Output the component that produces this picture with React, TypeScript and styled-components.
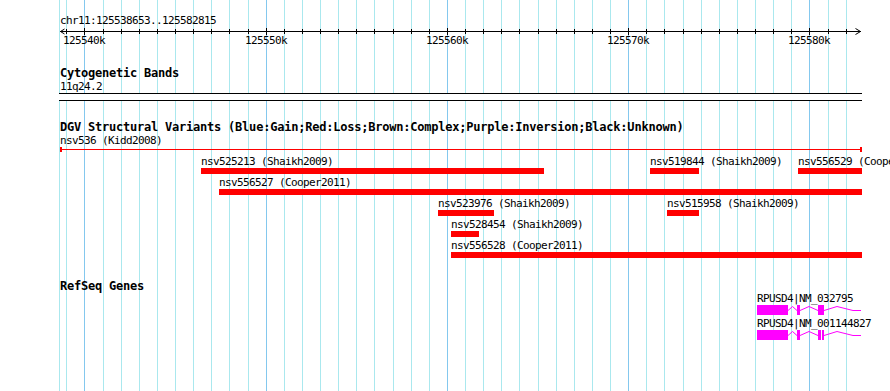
import React from "react";
import styled, { createGlobalStyle } from "styled-components";

const GlobalStyle = createGlobalStyle`
  html, body { margin: 0; padding: 0; background: #ffffff; }
`;

const MINOR = "#aae8ee";
const MAJOR = "#84c8ee";
const RED = "#ff0000";
const MAGENTA = "#ff00ff";
const FONT = `"DejaVu Sans Mono", "Liberation Mono", monospace`;

const gridX = (k: number) => Math.round(84.4 + k * 18.125);
const KS = Array.from({ length: 44 }, (_, i) => i - 1);

const Page = styled.div`
  position: relative;
  width: 890px;
  height: 391px;
  overflow: hidden;
  background: #ffffff;
  font-family: ${FONT};
  color: #000000;
`;

const GridLayer = styled.svg`
  position: absolute;
  top: 0;
  left: 0;
  z-index: 0;
  pointer-events: none;
`;

const Tracks = styled.div`
  position: relative;
  z-index: 1;
  display: flex;
  flex-direction: column;
  padding-top: 14px;
`;

const SmallText = styled.div`
  font-size: 11px;
  letter-spacing: -0.62px;
  line-height: 13px;
  white-space: nowrap;
`;

const LocationText = styled(SmallText)`
  padding-left: 60px;
`;

const AxisSvg = styled.svg`
  display: block;
  overflow: visible;
`;

const Track = styled.section<{ $gap: number }>`
  display: flex;
  flex-direction: column;
  margin-top: ${(p) => p.$gap}px;
`;

const TrackTitle = styled.h2`
  margin: 0;
  padding-left: 60px;
  font-size: 12px;
  font-weight: bold;
  letter-spacing: -0.22px;
  line-height: 13px;
  white-space: nowrap;
`;

const TrackLabel = styled(SmallText)`
  padding-left: 60px;
`;

const BandIdeogram = styled.div`
  margin-left: 59px;
  width: 803px;
  height: 8px;
  box-sizing: border-box;
  border-top: 1px solid #000;
  border-bottom: 1px solid #000;
  background: #ffffff;
`;

const FeatureCanvas = styled.div<{ $height: number; $offset?: number }>`
  position: relative;
  height: ${(p) => p.$height}px;
  margin-top: ${(p) => p.$offset ?? 0}px;
`;

const Feature = styled.div<{ $x: number; $top: number }>`
  position: absolute;
  left: ${(p) => p.$x}px;
  top: ${(p) => p.$top}px;
  display: flex;
  flex-direction: column;
  align-items: flex-start;
`;

const FeatureLabel = styled(SmallText)`
  line-height: 12px;
`;

const FeatureBar = styled.div<{ $w: number }>`
  width: ${(p) => p.$w}px;
  height: 6px;
  background: ${RED};
`;

const ThinSpan = styled.div<{ $w: number }>`
  width: ${(p) => p.$w}px;
  height: 5px;
  box-sizing: border-box;
  border-left: 2px solid ${RED};
  border-right: 2px solid ${RED};
  background: linear-gradient(${RED}, ${RED}) 0 2px / 100% 1px no-repeat;
`;

const GeneGlyph = styled.svg`
  display: block;
`;

type Variant = { name: string; x: number; end: number; row: number; thin?: boolean };

const VARIANTS: Variant[] = [
  { name: "nsv536 (Kidd2008)", x: 60, end: 862, row: 0, thin: true },
  { name: "nsv525213 (Shaikh2009)", x: 201, end: 544, row: 1 },
  { name: "nsv519844 (Shaikh2009)", x: 650, end: 699, row: 1 },
  { name: "nsv556529 (Cooper2011)", x: 798, end: 862, row: 1 },
  { name: "nsv556527 (Cooper2011)", x: 219, end: 862, row: 2 },
  { name: "nsv523976 (Shaikh2009)", x: 438, end: 494, row: 3 },
  { name: "nsv515958 (Shaikh2009)", x: 667, end: 699, row: 3 },
  { name: "nsv528454 (Shaikh2009)", x: 451, end: 479, row: 4 },
  { name: "nsv556528 (Cooper2011)", x: 451, end: 862, row: 5 },
];

type Gene = {
  name: string;
  exons: [number, number][];
  introns: string[];
};

const TAIL = "67,5.5 80,1.5 96,5.5 104,5.5";

const GENES: Gene[] = [
  {
    name: "RPUSD4|NM_032795",
    exons: [
      [0, 31],
      [40, 43],
      [61, 67],
    ],
    introns: ["31,5.5 35.5,1.5 40,5.5", "43,5.5 52,1.5 61,5.5", TAIL],
  },
  {
    name: "RPUSD4|NM_001144827",
    exons: [
      [0, 31],
      [40, 43],
      [61, 64],
      [65, 67],
    ],
    introns: ["31,5.5 35.5,1.5 40,5.5", "43,5.5 52,1.5 61,5.5", TAIL],
  },
];

const Grid: React.FC = () => (
  <GridLayer width={890} height={391}>
    <rect x={59} y={0} width={1} height={391} fill={MINOR} />
    {KS.map((k) => (
      <rect
        key={k}
        x={gridX(k)}
        y={0}
        width={1}
        height={391}
        fill={k % 10 === 0 ? MAJOR : MINOR}
      />
    ))}
  </GridLayer>
);

const Ruler: React.FC = () => (
  <AxisSvg width={890} height={23}>
    <rect x={60} y={4} width={801} height={1} fill="#000" />
    <path d="M64.5 2 L60.5 4.5 L64.5 7" stroke="#000" strokeWidth={1} fill="none" />
    <path d="M855.5 1.5 L860.5 4.5 L855.5 7.5" stroke="#000" strokeWidth={1} fill="none" />
    {KS.map((k) => {
      const major = k % 10 === 0;
      return (
        <rect
          key={k}
          x={gridX(k)}
          y={major ? 1 : 2}
          width={1}
          height={major ? 7 : 5}
          fill="#000"
        />
      );
    })}
    {[0, 10, 20, 30, 40].map((k) => (
      <text
        key={k}
        x={gridX(k) - 21}
        y={17}
        fontFamily={FONT}
        fontSize={11}
        letterSpacing={-0.62}
        fill="#000"
      >
        {`${125540 + k}k`}
      </text>
    ))}
  </AxisSvg>
);

const GeneDrawing: React.FC<{ gene: Gene }> = ({ gene }) => (
  <GeneGlyph width={105} height={10}>
    {gene.introns.map((pts, i) => (
      <polyline key={i} points={pts} stroke={MAGENTA} strokeWidth={1} fill="none" />
    ))}
    {gene.exons.map(([a, b], i) => (
      <rect key={i} x={a} y={0} width={b - a} height={10} fill={MAGENTA} />
    ))}
  </GeneGlyph>
);

export default function App() {
  return (
    <>
      <GlobalStyle />
      <Page>
        <Grid />
        <Tracks>
          <LocationText>chr11:125538653..125582815</LocationText>
          <Ruler />

          <Track $gap={17}>
            <TrackTitle>Cytogenetic Bands</TrackTitle>
            <TrackLabel>11q24.2</TrackLabel>
            <BandIdeogram />
          </Track>

          <Track $gap={20}>
            <TrackTitle>
              DGV Structural Variants (Blue:Gain;Red:Loss;Brown:Complex;Purple:Inversion;Black:Unknown)
            </TrackTitle>
            <FeatureCanvas $height={125} $offset={1}>
              {VARIANTS.map((v) => (
                <Feature key={v.name} $x={v.x} $top={v.row * 21}>
                  <FeatureLabel>{v.name}</FeatureLabel>
                  {v.thin ? <ThinSpan $w={v.end - v.x} /> : <FeatureBar $w={v.end - v.x} />}
                </Feature>
              ))}
            </FeatureCanvas>
          </Track>

          <Track $gap={20}>
            <TrackTitle>RefSeq Genes</TrackTitle>
            <FeatureCanvas $height={60}>
              {GENES.map((g, i) => (
                <Feature key={g.name} $x={757} $top={i * 25}>
                  <FeatureLabel>{g.name}</FeatureLabel>
                  <GeneDrawing gene={g} />
                </Feature>
              ))}
            </FeatureCanvas>
          </Track>
        </Tracks>
      </Page>
    </>
  );
}
